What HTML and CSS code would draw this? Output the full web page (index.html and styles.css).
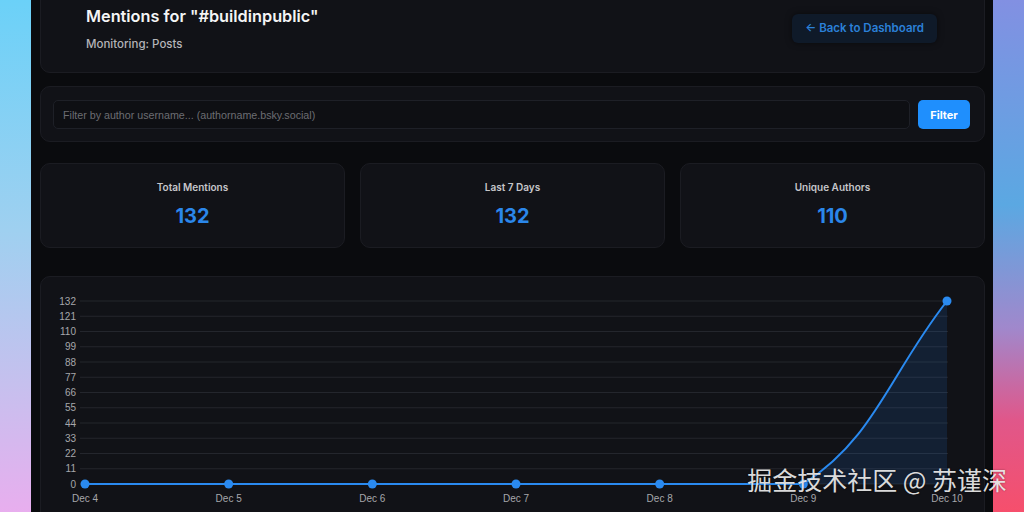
FILE: index.html
```html
<!DOCTYPE html>
<html lang="en">
<head>
    <meta charset="UTF-8">
    <meta name="viewport" content="width=device-width, initial-scale=1.0">
    <title>Mentions for "#buildinpublic"</title>
    <link rel="stylesheet" href="styles.css">
</head>
<body>
    <div class="edgeLeft"></div>
    <main class="app">
        <header class="card pageHeader">
            <div>
                <h1>Mentions for "#buildinpublic"</h1>
                <p class="subtitle">Monitoring: Posts</p>
            </div>
            <a class="backButton" href="#">&larr; Back to Dashboard</a>
        </header>

        <div class="card filterBar">
            <input type="text" class="filterInput" placeholder="Filter by author username... (authorname.bsky.social)">
            <button class="filterButton">Filter</button>
        </div>

        <div class="stats">
            <div class="card statCard">
                <div class="statLabel">Total Mentions</div>
                <div class="statValue">132</div>
            </div>
            <div class="card statCard">
                <div class="statLabel">Last 7 Days</div>
                <div class="statValue">132</div>
            </div>
            <div class="card statCard">
                <div class="statLabel">Unique Authors</div>
                <div class="statValue">110</div>
            </div>
        </div>

        <div class="card chartCard">
            <svg id="mentionsChart" width="943" height="240" viewBox="0 0 943 240"></svg>
        </div>
    </main>
    <div class="edgeRight"></div>

    <div class="watermark">掘金技术社区 @ 苏谨深</div>

    <script>
        // daily mention counts
        const labels = ['Dec 4', 'Dec 5', 'Dec 6', 'Dec 7', 'Dec 8', 'Dec 9', 'Dec 10'];
        const counts = [0, 0, 0, 0, 0, 0, 132];

        // plot area inside the svg
        const area = { left: 44, right: 906, top: 24, bottom: 207, max: 132, step: 11 };
        const svg = document.querySelector('#mentionsChart');
        const ns = 'http://www.w3.org/2000/svg';

        function el(name, attrs, text) {
            const node = document.createElementNS(ns, name);
            for (const key in attrs) node.setAttribute(key, attrs[key]);
            if (text !== undefined) node.textContent = text;
            svg.appendChild(node);
            return node;
        }

        function yFor(value) {
            return area.bottom - (value / area.max) * (area.bottom - area.top);
        }

        // horizontal grid + y axis ticks
        for (let v = 0; v <= area.max; v += area.step) {
            const y = yFor(v);
            el('line', { x1: 39, x2: area.right + 1, y1: y, y2: y, class: 'gridLine' });
            el('text', { x: 35, y: y + 3.5, 'text-anchor': 'end', class: 'axisText' }, v);
        }

        // points
        const stepX = (area.right - area.left) / (counts.length - 1);
        const pts = counts.map((c, i) => ({ x: area.left + i * stepX, y: yFor(c) }));

        // x axis labels
        labels.forEach((label, i) => {
            el('text', { x: pts[i].x, y: 225, 'text-anchor': 'middle', class: 'axisText' }, label);
        });

        // smooth the line like a tension 0.4 spline, kept inside the plot area
        const tension = 0.4;
        const clampY = y => Math.min(area.bottom, Math.max(area.top, y));
        pts.forEach((cur, i) => {
            const prev = pts[i - 1] || cur;
            const next = pts[i + 1] || cur;
            const d01 = Math.hypot(cur.x - prev.x, cur.y - prev.y);
            const d12 = Math.hypot(next.x - cur.x, next.y - cur.y);
            const s01 = d01 / (d01 + d12) || 0;
            const s12 = d12 / (d01 + d12) || 0;
            const fa = tension * s01;
            const fb = tension * s12;
            cur.cp1 = { x: cur.x - fa * (next.x - prev.x), y: clampY(cur.y - fa * (next.y - prev.y)) };
            cur.cp2 = { x: cur.x + fb * (next.x - prev.x), y: clampY(cur.y + fb * (next.y - prev.y)) };
        });

        let d = 'M' + pts[0].x + ' ' + pts[0].y;
        for (let i = 1; i < pts.length; i++) {
            const a = pts[i - 1], b = pts[i];
            d += ' C' + a.cp2.x + ' ' + a.cp2.y + ' ' + b.cp1.x + ' ' + b.cp1.y + ' ' + b.x + ' ' + b.y;
        }

        el('path', { d: d + ' L' + area.right + ' ' + area.bottom + ' L' + area.left + ' ' + area.bottom + ' Z', class: 'chartFill' });
        el('path', { d: d, class: 'chartLine' });
        pts.forEach(p => el('circle', { cx: p.x, cy: p.y, r: 4.5, class: 'chartPoint' }));
    </script>
</body>
</html>
```

FILE: styles.css
```css
* {
    margin: 0;
    padding: 0;
    box-sizing: border-box;
}
body {
    position: relative;
    display: flex;
    height: 512px;
    overflow: hidden;
    font-family: Inter, "Noto Sans", sans-serif;
    background-color: #0a0b0e;
}
.edgeLeft {
    flex: none;
    width: 31px;
    background: linear-gradient(#6bd1f8 0%, #9fd0f0 45%, #c6c0ee 75%, #e8aeee 100%);
}
.edgeRight {
    flex: none;
    width: 31px;
    background: linear-gradient(#8290e2 0%, #5ba8e2 40%, #a088cc 64%, #e0578a 82%, #f64f6c 100%);
}
.app {
    flex: none;
    width: 962px;
    padding: 0 8px 0 9px;
    background-color: #0a0b0e;
}
.card {
    background-color: #111217;
    border: 1px solid #1b1c22;
    border-radius: 10px;
}
.pageHeader {
    display: flex;
    justify-content: space-between;
    align-items: center;
    margin-top: -20px;
    margin-bottom: 13px;
    padding: 24px 47px 20px 45px;
}
h1 {
    font-size: 16.3px;
    font-weight: 600;
    line-height: 22px;
    color: #f4f4f5;
    margin-bottom: 9px;
}
.subtitle {
    font-size: 11.5px;
    font-weight: 500;
    line-height: 16px;
    color: #b4b4b8;
}
.backButton {
    display: block;
    padding: 7px 13px;
    font-size: 11.5px;
    font-weight: 600;
    line-height: 15px;
    color: #2b80d8;
    text-decoration: none;
    background-color: #0f1a29;
    border-radius: 6px;
    box-shadow: 0 0 6px rgba(0, 0, 0, 0.5);
}
.filterBar {
    display: flex;
    gap: 8px;
    margin-bottom: 21px;
    padding: 13px 14px 12px 12px;
}
.filterInput {
    flex: 1;
    height: 29px;
    padding-left: 9px;
    font-family: "Liberation Sans", Arial, sans-serif;
    font-size: 10.7px;
    color: #d0d0d0;
    background-color: #0e0f13;
    border: 1px solid #1e2027;
    border-radius: 5px;
    outline: none;
}
.filterInput::placeholder {
    color: #6c6d72;
}
.filterButton {
    width: 52px;
    height: 29px;
    font-family: Inter, sans-serif;
    font-size: 11px;
    font-weight: 700;
    color: #ffffff;
    background-color: #1f8ffd;
    border: none;
    border-radius: 5px;
}
.stats {
    display: grid;
    grid-template-columns: repeat(3, 1fr);
    gap: 15px;
    margin-bottom: 28px;
}
.statCard {
    height: 85px;
    padding-top: 17px;
    text-align: center;
}
.statLabel {
    font-size: 10px;
    font-weight: 600;
    line-height: 13px;
    color: #c6c6ca;
    margin-bottom: 10px;
}
.statValue {
    font-size: 20px;
    font-weight: 700;
    line-height: 24px;
    color: #2b87ea;
}
.chartCard {
    height: 260px;
}
.chartCard svg {
    display: block;
}
.gridLine {
    stroke: #24262d;
    stroke-width: 1;
}
.axisText {
    font-family: "Liberation Sans", Arial, sans-serif;
    font-size: 10px;
    fill: #a6a7ab;
}
.chartFill {
    fill: rgba(40, 130, 240, 0.13);
}
.chartLine {
    fill: none;
    stroke: #2a8af0;
    stroke-width: 2;
}
.chartPoint {
    fill: #2a8af0;
}
.watermark {
    position: absolute;
    right: 17px;
    bottom: 18px;
    font-family: "Noto Sans CJK SC", sans-serif;
    font-size: 25px;
    line-height: 30px;
    color: rgba(240, 240, 240, 0.92);
    text-shadow: 0 0 2px rgba(0, 0, 0, 0.4);
}
```
